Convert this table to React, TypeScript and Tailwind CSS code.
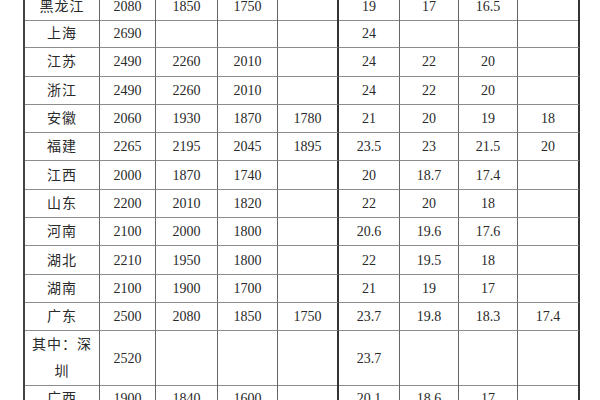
const rows: string[][] = [
  ["黑龙江", "2080", "1850", "1750", "", "19", "17", "16.5", ""],
  ["上海", "2690", "", "", "", "24", "", "", ""],
  ["江苏", "2490", "2260", "2010", "", "24", "22", "20", ""],
  ["浙江", "2490", "2260", "2010", "", "24", "22", "20", ""],
  ["安徽", "2060", "1930", "1870", "1780", "21", "20", "19", "18"],
  ["福建", "2265", "2195", "2045", "1895", "23.5", "23", "21.5", "20"],
  ["江西", "2000", "1870", "1740", "", "20", "18.7", "17.4", ""],
  ["山东", "2200", "2010", "1820", "", "22", "20", "18", ""],
  ["河南", "2100", "2000", "1800", "", "20.6", "19.6", "17.6", ""],
  ["湖北", "2210", "1950", "1800", "", "22", "19.5", "18", ""],
  ["湖南", "2100", "1900", "1700", "", "21", "19", "17", ""],
  ["广东", "2500", "2080", "1850", "1750", "23.7", "19.8", "18.3", "17.4"],
  ["其中：深圳", "2520", "", "", "", "23.7", "", "", ""],
  ["广西", "1900", "1840", "1600", "", "20.1", "18.6", "17", ""],
];

const Cell = ({ text, col }: { text: string; col: number }) => {
  const thick = col === 4 || col === 8;
  return (
    <div
      className={`flex items-center justify-center border-b border-b-[#8c8c8c] text-center ${
        thick ? "border-r-2 border-r-[#333]" : "border-r border-r-[#666]"
      } ${col === 0 ? "px-[4px] text-[14px] leading-[27px] tracking-[1px]" : "text-[14px]"}`}
    >
      {text}
    </div>
  );
};

export default function App() {
  return (
    <div className="h-[400px] w-[600px] overflow-hidden bg-white">
      <div
        className="ml-[23px] mt-[-7px] w-[557px] border-l-2 border-l-[#444] text-[#2a2a2a]"
        style={{ fontFamily: '"Liberation Serif", "Noto Sans CJK SC", serif' }}
      >
        {rows.map((row, i) => (
          <div
            key={i}
            className={`grid grid-cols-[75px_56px_62px_60px_61px_61px_59px_59px_62px] ${
              i === 0 ? "h-[27px]" : i === 12 ? "h-[54px]" : "h-[28.3px]"
            }`}
          >
            {row.map((t, j) => (
              <Cell key={j} text={t} col={j} />
            ))}
          </div>
        ))}
      </div>
    </div>
  );
}
